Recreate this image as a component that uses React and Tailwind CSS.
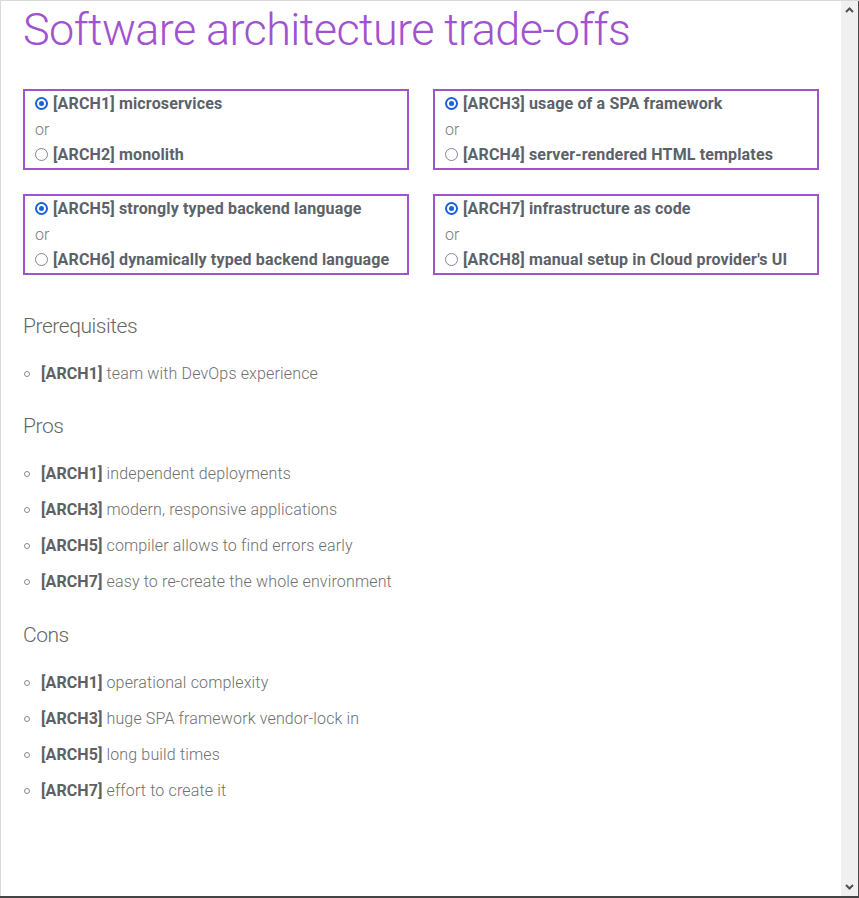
import React from "react";

const boxes = [
  ["[ARCH1] microservices", "[ARCH2] monolith"],
  ["[ARCH3] usage of a SPA framework", "[ARCH4] server-rendered HTML templates"],
  ["[ARCH5] strongly typed backend language", "[ARCH6] dynamically typed backend language"],
  ["[ARCH7] infrastructure as code", "[ARCH8] manual setup in Cloud provider's UI"],
];

const sections = [
  { title: "Prerequisites", items: [["[ARCH1]", "team with DevOps experience"]] },
  {
    title: "Pros",
    items: [
      ["[ARCH1]", "independent deployments"],
      ["[ARCH3]", "modern, responsive applications"],
      ["[ARCH5]", "compiler allows to find errors early"],
      ["[ARCH7]", "easy to re-create the whole environment"],
    ],
  },
  {
    title: "Cons",
    items: [
      ["[ARCH1]", "operational complexity"],
      ["[ARCH3]", "huge SPA framework vendor-lock in"],
      ["[ARCH5]", "long build times"],
      ["[ARCH7]", "effort to create it"],
    ],
  },
];

function Radio({ checked }) {
  if (checked) {
    return (
      <span className="w-[13px] h-[13px] rounded-full border-[2px] border-[#1a62d6] flex items-center justify-center shrink-0">
        <span className="w-[5px] h-[5px] rounded-full bg-[#1a62d6]" />
      </span>
    );
  }
  return <span className="w-[13px] h-[13px] rounded-full border-[1.5px] border-[#858590] shrink-0" />;
}

function Choice({ a, b }) {
  return (
    <div className="border-2 border-[#a052cf] leading-[25.5px] text-[16px]">
      <div className="flex items-center gap-[5px] pl-[10px] font-bold tracking-[0.15px] text-[#5c6269]">
        <Radio checked />
        <span>{a}</span>
      </div>
      <div className="pl-[10px] text-[#7a7a7a] font-light">or</div>
      <div className="flex items-center gap-[5px] pl-[10px] font-bold tracking-[0.15px] text-[#5c6269]">
        <Radio />
        <span>{b}</span>
      </div>
    </div>
  );
}

export default function App() {
  return (
    <div
      className="w-[859px] h-[898px] flex flex-col bg-white overflow-hidden"
      style={{ fontFamily: "Roboto, 'Liberation Sans', sans-serif" }}
    >
      <div className="flex-1 flex border-t border-l border-[#d9d9d9] min-h-0">
        <div className="flex-1 pl-[22px] min-w-0">
          <h1 className="text-[45px] leading-[57px] tracking-[-0.6px] font-light text-[#a052cf]">
            Software architecture trade-offs
          </h1>
          <div className="grid grid-cols-2 gap-x-[24px] gap-y-[24.5px] mt-[31px] w-[796px]">
            {boxes.map(([a, b]) => (
              <Choice key={a} a={a} b={b} />
            ))}
          </div>
          <div className="mt-[36px]">
            {sections.map((s, i) => (
              <div key={s.title} className={i > 0 ? "mt-[19.5px]" : ""}>
                <h2 className="text-[21px] leading-[30px] tracking-[-0.45px] font-light text-[#666]">
                  {s.title}
                </h2>
                <ul className="mt-[15px]">
                  {s.items.map(([tag, text]) => (
                    <li key={tag + text} className="flex items-center leading-[36px] text-[16px]">
                      <span className="ml-px w-[6px] h-[6px] rounded-full border border-[#8a8a8a] shrink-0" />
                      <span className="ml-[11px]">
                        <span className="font-bold tracking-[0.1px] text-[#5e6064]">{tag}</span>{" "}
                        <span className="font-light tracking-[0.15px] text-[#6f6f6f]">{text}</span>
                      </span>
                    </li>
                  ))}
                </ul>
              </div>
            ))}
          </div>
        </div>
        <div className="w-[17px] bg-[#f0f0f0] flex flex-col justify-between items-center py-[6px]">
          <svg width="9" height="6" viewBox="0 0 9 6">
            <path d="M1 5 L4.5 1.5 L8 5" fill="none" stroke="#505050" strokeWidth="2" />
          </svg>
          <svg width="9" height="6" viewBox="0 0 9 6">
            <path d="M1 1 L4.5 4.5 L8 1" fill="none" stroke="#505050" strokeWidth="2" />
          </svg>
        </div>
        <div className="w-px bg-[#4a4a4a]" />
      </div>
      <div className="h-[2px] bg-[#444]" />
    </div>
  );
}
